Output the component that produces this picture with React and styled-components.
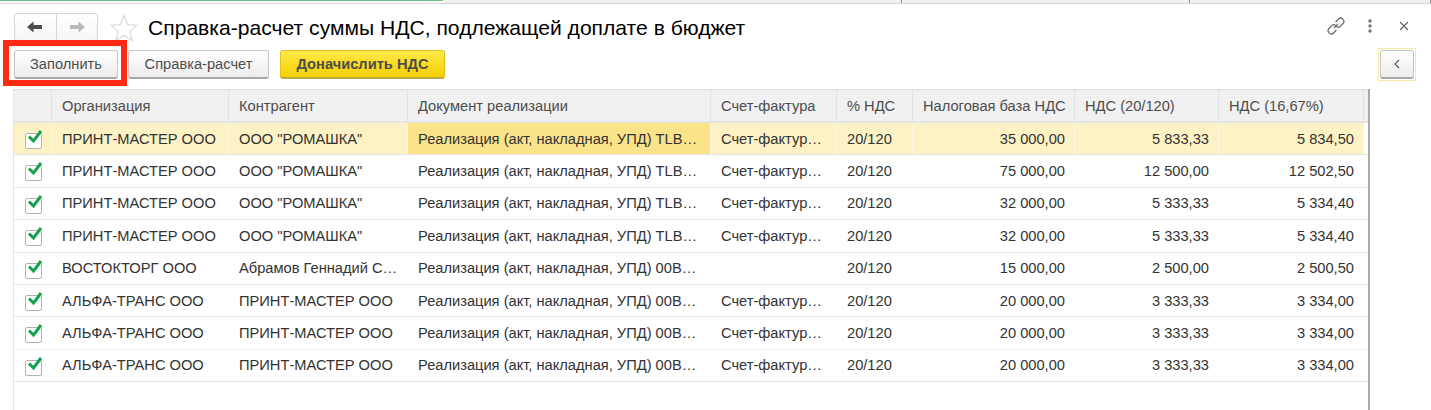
import React from 'react';
import styled, {createGlobalStyle} from 'styled-components';

const GlobalStyle = createGlobalStyle`
  html, body {
    margin: 0;
    padding: 0;
    background: #fff;
  }
  body {
    font-family: "Liberation Sans", Arial, sans-serif;
    color: #333;
  }
  * {
    box-sizing: border-box;
  }
`

const Page = styled.div`
  position: relative;
  width: 1431px;
  height: 410px;
  overflow: hidden;
  background: #fff;
  display: flex;
  flex-direction: column;
`

const TopStrip = styled.div`
  height: 4px;
  display: flex;
  border-bottom: 1px solid #d8d8d8;
  flex: none;
`

const TopTab = styled.div`
  width: ${p => p.$w}px;
  background: ${p => p.$green ? 'linear-gradient(#6fbf8b 0 1px, #fff 1px)' : '#f0f0f0'};
  border-right: 1px solid ${p => p.$green ? '#fff' : '#8c8c8c'};
`

const Header = styled.div`
  height: 37px;
  padding: 9px 14px 0 14px;
  display: flex;
  align-items: flex-start;
  flex: none;
`

const NavGroup = styled.div`
  width: 84px;
  height: 28px;
  border: 1px solid #d6d6d6;
  border-radius: 3px;
  display: flex;
  background: linear-gradient(#fff, #f6f6f6);
`

const NavButton = styled.div`
  flex: 1;
  display: flex;
  align-items: center;
  justify-content: center;
  & + & {
    border-left: 1px solid #d6d6d6;
  }
`

const StarIcon = styled.svg`
  width: 28px;
  height: 28px;
  margin: 1px 10px 0 12px;
  flex: none;
`

const Title = styled.h1`
  margin: 2px 0 0;
  font-size: 21.1px;
  line-height: 25px;
  font-weight: 400;
  color: #000;
  white-space: nowrap;
`

const HeaderActions = styled.div`
  margin-left: auto;
  display: flex;
  align-items: center;
  height: 26px;
  margin-right: 8px;
  gap: 22px;
`

const Toolbar = styled.div`
  height: 48px;
  padding: 9px 14px 0 14px;
  display: flex;
  align-items: flex-start;
  flex: none;
`

const Button = styled.div`
  height: 29px;
  width: ${p => p.$w}px;
  margin-right: ${p => p.$gap || 0}px;
  border: 1px solid ${p => p.$primary ? '#e0c020' : '#c6c6c6'};
  border-bottom: 2px solid ${p => p.$primary ? '#b8a848' : '#a8a8a8'};
  border-radius: 3px;
  background: ${p => p.$primary ? 'linear-gradient(#ffe94a, #f5cf00)' : 'linear-gradient(#ffffff, #ececec)'};
  display: flex;
  align-items: center;
  justify-content: center;
  font-size: 14.67px;
  font-weight: ${p => p.$primary ? 700 : 400};
  color: #4d4d4d;
`

const Highlight = styled.div`
  position: absolute;
  left: 3px;
  top: 40px;
  width: 124px;
  height: 46px;
  border: 6px solid #ff2a12;
  pointer-events: none;
`

const CollapseWrap = styled.div`
  margin-left: auto;
  margin-right: 1px;
  margin-top: -2px;
  padding: 1px;
  border: 1px solid #fbe9a6;
  display: flex;
`

const CollapseButton = styled(Button)`
  width: 34px;
`

const Table = styled.div`
  width: 1357px;
  height: 321px;
  margin-left: 13px;
  border-left: 1px solid #e4e4e4;
  border-right: 2px solid #a9a9a9;
  flex: none;
`

const Row = styled.div`
  display: grid;
  grid-template-columns: 38px 177px 179px 303px 126px 76px 162px 144px 145px;
  height: 32.4px;
  padding-right: 4px;
  border-bottom: 1px solid ${p => p.$strong ? '#e4e4e4' : '#efefef'};
  background: ${p => p.$active ? '#fdf2c5' : '#fff'};
  background-clip: content-box;
`

const HeadRow = styled(Row)`
  height: 34px;
  background: #f1f1f1;
  border-top: 1px solid #dedede;
  border-bottom: 2px solid #e4e4e4;
`

const HeadCell = styled.div`
  padding-left: 10px;
  display: flex;
  align-items: center;
  font-size: 14.67px;
  color: #4d4d4d;
  white-space: nowrap;
  border-right: 1px solid #e2e2e2;
  overflow: hidden;
`

const Cell = styled.div`
  padding: 0 ${p => p.$right ? '9px' : '4px'} 0 10px;
  display: flex;
  align-items: center;
  justify-content: ${p => p.$right ? 'flex-end' : 'flex-start'};
  font-size: 14.67px;
  color: #333;
  white-space: nowrap;
  overflow: hidden;
  min-width: 0;
  border-right: 1px solid ${p => p.$active ? '#fff8df' : 'transparent'};
  background: ${p => p.$focus ? '#fbe38a' : 'transparent'};
`

const Ellipsis = styled.span`
  overflow: hidden;
`

const CheckCell = styled.div`
  position: relative;
  border-right: 1px solid ${p => p.$active ? '#fff8df' : 'transparent'};
`

const CheckBox = styled.div`
  position: absolute;
  left: 11px;
  top: 10px;
  width: 17px;
  height: 16px;
  border: 1px solid #b2b2b2;
  border-radius: 2px;
  background: #fff;
`

const CheckMark = styled.svg`
  position: absolute;
  left: 13px;
  top: 6px;
  width: 16px;
  height: 15px;
`

const rows = [
    ['ПРИНТ-МАСТЕР ООО', 'ООО "РОМАШКА"', 'Реализация (акт, накладная, УПД) TLB…', 'Счет-фактур…', '20/120', '35 000,00', '5 833,33', '5 834,50'],
    ['ПРИНТ-МАСТЕР ООО', 'ООО "РОМАШКА"', 'Реализация (акт, накладная, УПД) TLB…', 'Счет-фактур…', '20/120', '75 000,00', '12 500,00', '12 502,50'],
    ['ПРИНТ-МАСТЕР ООО', 'ООО "РОМАШКА"', 'Реализация (акт, накладная, УПД) TLB…', 'Счет-фактур…', '20/120', '32 000,00', '5 333,33', '5 334,40'],
    ['ПРИНТ-МАСТЕР ООО', 'ООО "РОМАШКА"', 'Реализация (акт, накладная, УПД) TLB…', 'Счет-фактур…', '20/120', '32 000,00', '5 333,33', '5 334,40'],
    ['ВОСТОКТОРГ ООО', 'Абрамов Геннадий С…', 'Реализация (акт, накладная, УПД) 00В…', '', '20/120', '15 000,00', '2 500,00', '2 500,50'],
    ['АЛЬФА-ТРАНС ООО', 'ПРИНТ-МАСТЕР ООО', 'Реализация (акт, накладная, УПД) 00В…', 'Счет-фактур…', '20/120', '20 000,00', '3 333,33', '3 334,00'],
    ['АЛЬФА-ТРАНС ООО', 'ПРИНТ-МАСТЕР ООО', 'Реализация (акт, накладная, УПД) 00В…', 'Счет-фактур…', '20/120', '20 000,00', '3 333,33', '3 334,00'],
    ['АЛЬФА-ТРАНС ООО', 'ПРИНТ-МАСТЕР ООО', 'Реализация (акт, накладная, УПД) 00В…', 'Счет-фактур…', '20/120', '20 000,00', '3 333,33', '3 334,00'],
]

const heads = ['Организация', 'Контрагент', 'Документ реализации', 'Счет-фактура', '% НДС', 'Налоговая база НДС', 'НДС (20/120)', 'НДС (16,67%)']

function Arrow({color, flip}) {
    return (
        <svg width="18" height="14" viewBox="0 0 18 14" style={flip ? {transform: 'scaleX(-1)'} : undefined}>
            <path d="M1 7 L7.5 1.5 V5 H16 V9 H7.5 V12.5 Z" fill={color}/>
        </svg>
    )
}

function App() {
    return (
        <Page>
            <GlobalStyle/>
            <TopStrip>
                <TopTab $w={444} $green/>
                <TopTab $w={458}/>
                <TopTab $w={288}/>
                <TopTab $w={241}/>
            </TopStrip>
            <Header>
                <NavGroup>
                    <NavButton><Arrow color="#4d4d4d"/></NavButton>
                    <NavButton><Arrow color="#b9b9b9" flip/></NavButton>
                </NavGroup>
                <StarIcon viewBox="0 0 28 28">
                    <path d="M14 1.5 L17.7 10.6 L27 11.2 L19.9 17.4 L22.2 26.6 L14 21.5 L5.8 26.6 L8.1 17.4 L1 11.2 L10.3 10.6 Z" fill="#fff" stroke="#d9d9d9" strokeWidth="1.2"/>
                </StarIcon>
                <Title>Справка-расчет суммы НДС, подлежащей доплате в бюджет</Title>
                <HeaderActions>
                    <svg width="18" height="18" viewBox="0 0 18 18" fill="none" stroke="#666" strokeWidth="1.2" strokeLinecap="round">
                        <path d="M7.5 10.5 L10.5 7.5"/>
                        <path d="M9 4.5 L11.5 2 C12.6 0.9 14.6 0.9 15.9 2.1 C17.1 3.4 17.1 5.4 16 6.5 L13.2 9.3 C12.1 10.4 10.4 10.4 9.4 9.4"/>
                        <path d="M9 13.5 L6.5 16 C5.4 17.1 3.4 17.1 2.1 15.9 C0.9 14.6 0.9 12.6 2 11.5 L4.8 8.7 C5.9 7.6 7.6 7.6 8.6 8.6"/>
                    </svg>
                    <svg width="6" height="14" viewBox="0 0 6 14" fill="#777">
                        <circle cx="3" cy="2" r="1.7"/>
                        <circle cx="3" cy="7" r="1.7"/>
                        <circle cx="3" cy="12" r="1.7"/>
                    </svg>
                    <svg width="10" height="10" viewBox="0 0 10 10" stroke="#666" strokeWidth="1.2" style={{marginLeft: 4}}>
                        <path d="M1 1 L9 9 M9 1 L1 9"/>
                    </svg>
                </HeaderActions>
            </Header>
            <Toolbar>
                <Button $w={104} $gap={10}>Заполнить</Button>
                <Button $w={141} $gap={11}>Справка-расчет</Button>
                <Button $w={165} $primary>Доначислить НДС</Button>
                <CollapseWrap>
                    <CollapseButton>
                        <svg width="6" height="10" viewBox="0 0 6 10" fill="none" stroke="#555" strokeWidth="1.1">
                            <path d="M5 1 L1 5 L5 9"/>
                        </svg>
                    </CollapseButton>
                </CollapseWrap>
            </Toolbar>
            <Highlight/>
            <Table>
                <HeadRow>
                    <HeadCell/>
                    {heads.map(h => <HeadCell key={h}>{h}</HeadCell>)}
                </HeadRow>
                {rows.map((r, i) => (
                    <Row key={i} $active={i === 0} $strong={i !== 6}>
                        <CheckCell $active={i === 0}>
                            <CheckBox/>
                            <CheckMark viewBox="0 0 16 15">
                                <path d="M2 7.5 L6.5 12 L14 2" fill="none" stroke="#14a050" strokeWidth="3"/>
                            </CheckMark>
                        </CheckCell>
                        {r.map((c, j) => (
                            <Cell key={j} $right={j >= 5} $active={i === 0} $focus={i === 0 && j === 2}>
                                <Ellipsis>{c}</Ellipsis>
                            </Cell>
                        ))}
                    </Row>
                ))}
            </Table>
        </Page>
    );
}

export default App;
